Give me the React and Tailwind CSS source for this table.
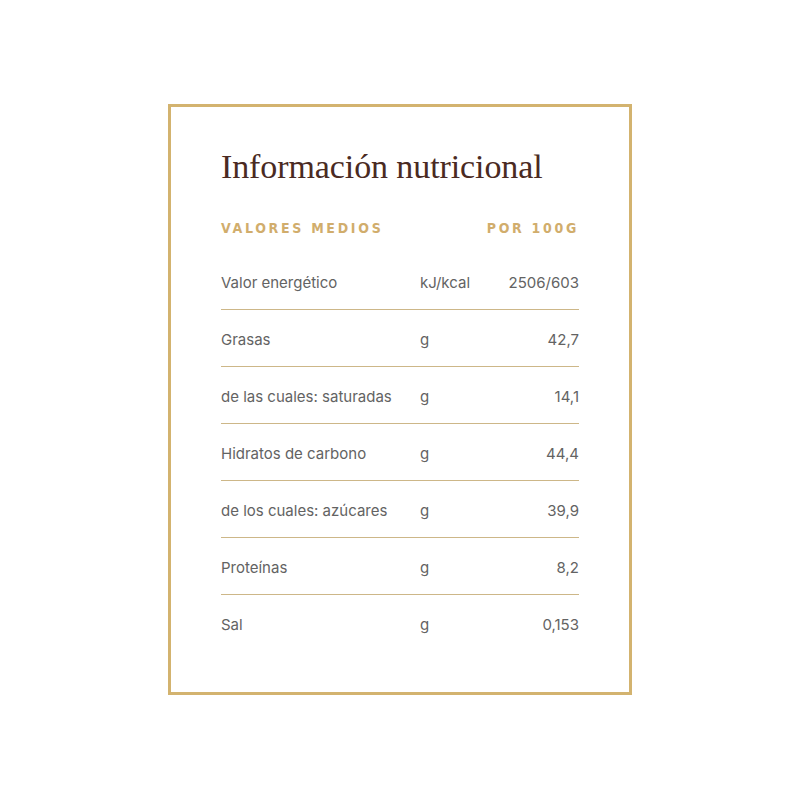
import React from "react";

const rows = [
  { label: "Valor energético", unit: "kJ/kcal", value: "2506/603" },
  { label: "Grasas", unit: "g", value: "42,7" },
  { label: "de las cuales: saturadas", unit: "g", value: "14,1" },
  { label: "Hidratos de carbono", unit: "g", value: "44,4" },
  { label: "de los cuales: azúcares", unit: "g", value: "39,9" },
  { label: "Proteínas", unit: "g", value: "8,2" },
  { label: "Sal", unit: "g", value: "0,153" },
];

export default function App() {
  return (
    <div className="min-h-screen bg-white pt-[104px]">
      <div className="mx-auto w-[464px] border-[3px] border-[#d3b36f] bg-white px-[50px] pt-[40px] pb-[40px]">
        {/* 제목 */}
        <h1 className="h-[40px] font-['Liberation_Serif',serif] text-[34px] leading-[40px] tracking-[-0.1px] text-[#4a2a22]">
          Información nutricional
        </h1>

        {/* 헤더 */}
        <div className="mt-[31px] flex h-[20px] items-center justify-between font-['Liberation_Sans_Narrow','DejaVu_Sans_Condensed',sans-serif] text-[14px] font-bold tracking-[2.7px] text-[#d1ad6c]">
          <span>VALORES MEDIOS</span>
          <span>POR 100G</span>
        </div>

        {/* 표 */}
        <div className="mt-[15px] font-['Inter',sans-serif] text-[15px] text-[#636363]">
          {rows.map((r, i) => (
            <div
              key={r.label}
              className={
                i < rows.length - 1
                  ? "flex pt-[20px] pb-[16px] leading-[20px] border-b border-[#cdb788]"
                  : "flex pt-[20px] pb-[17px] leading-[20px]"
              }
            >
              <span className="w-[199px]">{r.label}</span>
              <span className="flex-1">{r.unit}</span>
              <span className="text-right">{r.value}</span>
            </div>
          ))}
        </div>
      </div>
    </div>
  );
}
